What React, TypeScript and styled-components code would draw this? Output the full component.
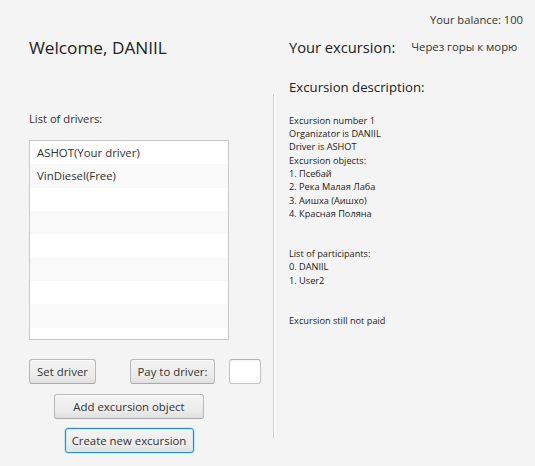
import styled, { createGlobalStyle, css } from "styled-components";

const GlobalStyle = createGlobalStyle`
  html, body {
    margin: 0;
    padding: 0;
    background: #f4f4f4;
  }
  body {
    font-family: "Open Sans", "Noto Sans", sans-serif;
    color: #333333;
  }
`;

const Page = styled.div`
  width: 535px;
  height: 466px;
  background: #f4f4f4;
  display: flex;
  flex-direction: column;
  overflow: hidden;
`;

const TopBar = styled.div`
  display: flex;
  justify-content: flex-end;
  padding: 12px 12px 0 0;
  height: 16px;
  font-size: 11.2px;
  line-height: 16px;
`;

const Columns = styled.div`
  display: flex;
  flex: 1;
`;

const LeftColumn = styled.div`
  width: 244px;
  padding-left: 29px;
  display: flex;
  flex-direction: column;
`;

const Title = styled.h1`
  margin: 8.6px 0 0;
  font-size: 17.2px;
  line-height: 22px;
  font-weight: 400;
  color: #222222;
`;

const Label = styled.div<{ $top: number }>`
  margin-top: ${(p) => p.$top}px;
  font-size: 11.2px;
  line-height: 16px;
`;

const ListBox = styled.div`
  margin-top: 13px;
  width: 198px;
  height: 198px;
  border: 1px solid #c8c8c8;
  background: #ffffff;
  display: flex;
  flex-direction: column;
  overflow: hidden;
`;

const ListRow = styled.div<{ $odd: boolean }>`
  flex: 0 0 23.33px;
  display: flex;
  align-items: center;
  padding-left: 7px;
  font-size: 11.4px;
  background: ${(p) => (p.$odd ? "#f9f9f9" : "#ffffff")};
`;

const ButtonRow = styled.div<{ $top: number }>`
  margin-top: ${(p) => p.$top}px;
  display: flex;
  align-items: center;
`;

const CenterRow = styled.div<{ $top: number }>`
  margin-top: ${(p) => p.$top}px;
  width: 200px;
  display: flex;
  justify-content: center;
`;

const FxButton = styled.button<{ $w: number; $focused?: boolean; $gap?: number }>`
  box-sizing: border-box;
  width: ${(p) => p.$w}px;
  height: 25px;
  margin: 0 0 0 ${(p) => p.$gap ?? 0}px;
  padding: 0;
  font-family: "Open Sans", "Noto Sans", sans-serif;
  font-size: 11.4px;
  color: #333333;
  border: 1px solid #b9b9b9;
  border-bottom-color: #a9a9a9;
  border-radius: 3px;
  background: linear-gradient(to bottom, #f3f3f3 0%, #ebebeb 70%, #dfdfdf 100%);
  box-shadow: inset 0 1px 0 #fbfbfb;
  display: flex;
  align-items: center;
  justify-content: center;
  ${(p) =>
    p.$focused &&
    css`
      border-color: #039ed3;
      box-shadow: inset 0 0 0 1px #cdebf6, 0 0 0 0.5px rgba(3, 158, 211, 0.35);
    `}
`;

const TextField = styled.div`
  box-sizing: border-box;
  width: 32px;
  height: 25px;
  margin-left: 14px;
  border: 1px solid #c4c4c4;
  border-top-color: #b4b4b4;
  border-radius: 3px;
  background: linear-gradient(to bottom, #f6f6f6 0px, #ffffff 3px);
`;

const Separator = styled.div`
  margin-top: 66px;
  width: 1px;
  height: 344px;
  border-left: 1px solid #d2d2d2;
  background: #ffffff;
`;

const RightColumn = styled.div`
  flex: 1;
  padding-left: 14px;
  display: flex;
  flex-direction: column;
`;

const ExcursionRow = styled.div`
  margin-top: 9px;
  display: flex;
  align-items: center;
  gap: 16px;
`;

const Heading = styled.div`
  font-size: 14.7px;
  line-height: 20px;
  color: #222222;
`;

const ExcursionName = styled.div`
  font-size: 11.3px;
  line-height: 16px;
`;

const SubHeading = styled.div`
  margin-top: 20.8px;
  font-size: 13.2px;
  line-height: 18px;
  color: #222222;
`;

const Description = styled.div`
  margin-top: 18px;
  font-size: 9.2px;
  line-height: 13.33px;
  white-space: pre-line;
  color: #222222;
`;

const drivers = ["ASHOT(Your driver)", "VinDiesel(Free)", "", "", "", "", "", "", ""];

const description = `Excursion number 1
Organizator is DANIIL
Driver is ASHOT
Excursion objects:
1. Псебай
2. Река Малая Лаба
3. Аишха (Аишхо)
4. Красная Поляна


List of participants:
0. DANIIL
1. User2


Excursion still not paid`;

export default function App() {
  return (
    <Page>
      <GlobalStyle />
      <TopBar>Your balance: 100</TopBar>
      <Columns>
        <LeftColumn>
          <Title>Welcome, DANIIL</Title>
          <Label $top={52.4}>List of drivers:</Label>
          <ListBox>
            {drivers.map((d, i) => (
              <ListRow key={i} $odd={i % 2 === 1}>
                {d}
              </ListRow>
            ))}
          </ListBox>
          <ButtonRow $top={19}>
            <FxButton $w={67}>Set driver</FxButton>
            <FxButton $w={85} $gap={34}>
              Pay to driver:
            </FxButton>
            <TextField />
          </ButtonRow>
          <CenterRow $top={10}>
            <FxButton $w={150}>Add excursion object</FxButton>
          </CenterRow>
          <CenterRow $top={9}>
            <FxButton $w={129} $focused>
              Create new excursion
            </FxButton>
          </CenterRow>
        </LeftColumn>
        <Separator />
        <RightColumn>
          <ExcursionRow>
            <Heading>Your excursion:</Heading>
            <ExcursionName>Через горы к морю</ExcursionName>
          </ExcursionRow>
          <SubHeading>Excursion description:</SubHeading>
          <Description>{description}</Description>
        </RightColumn>
      </Columns>
    </Page>
  );
}
